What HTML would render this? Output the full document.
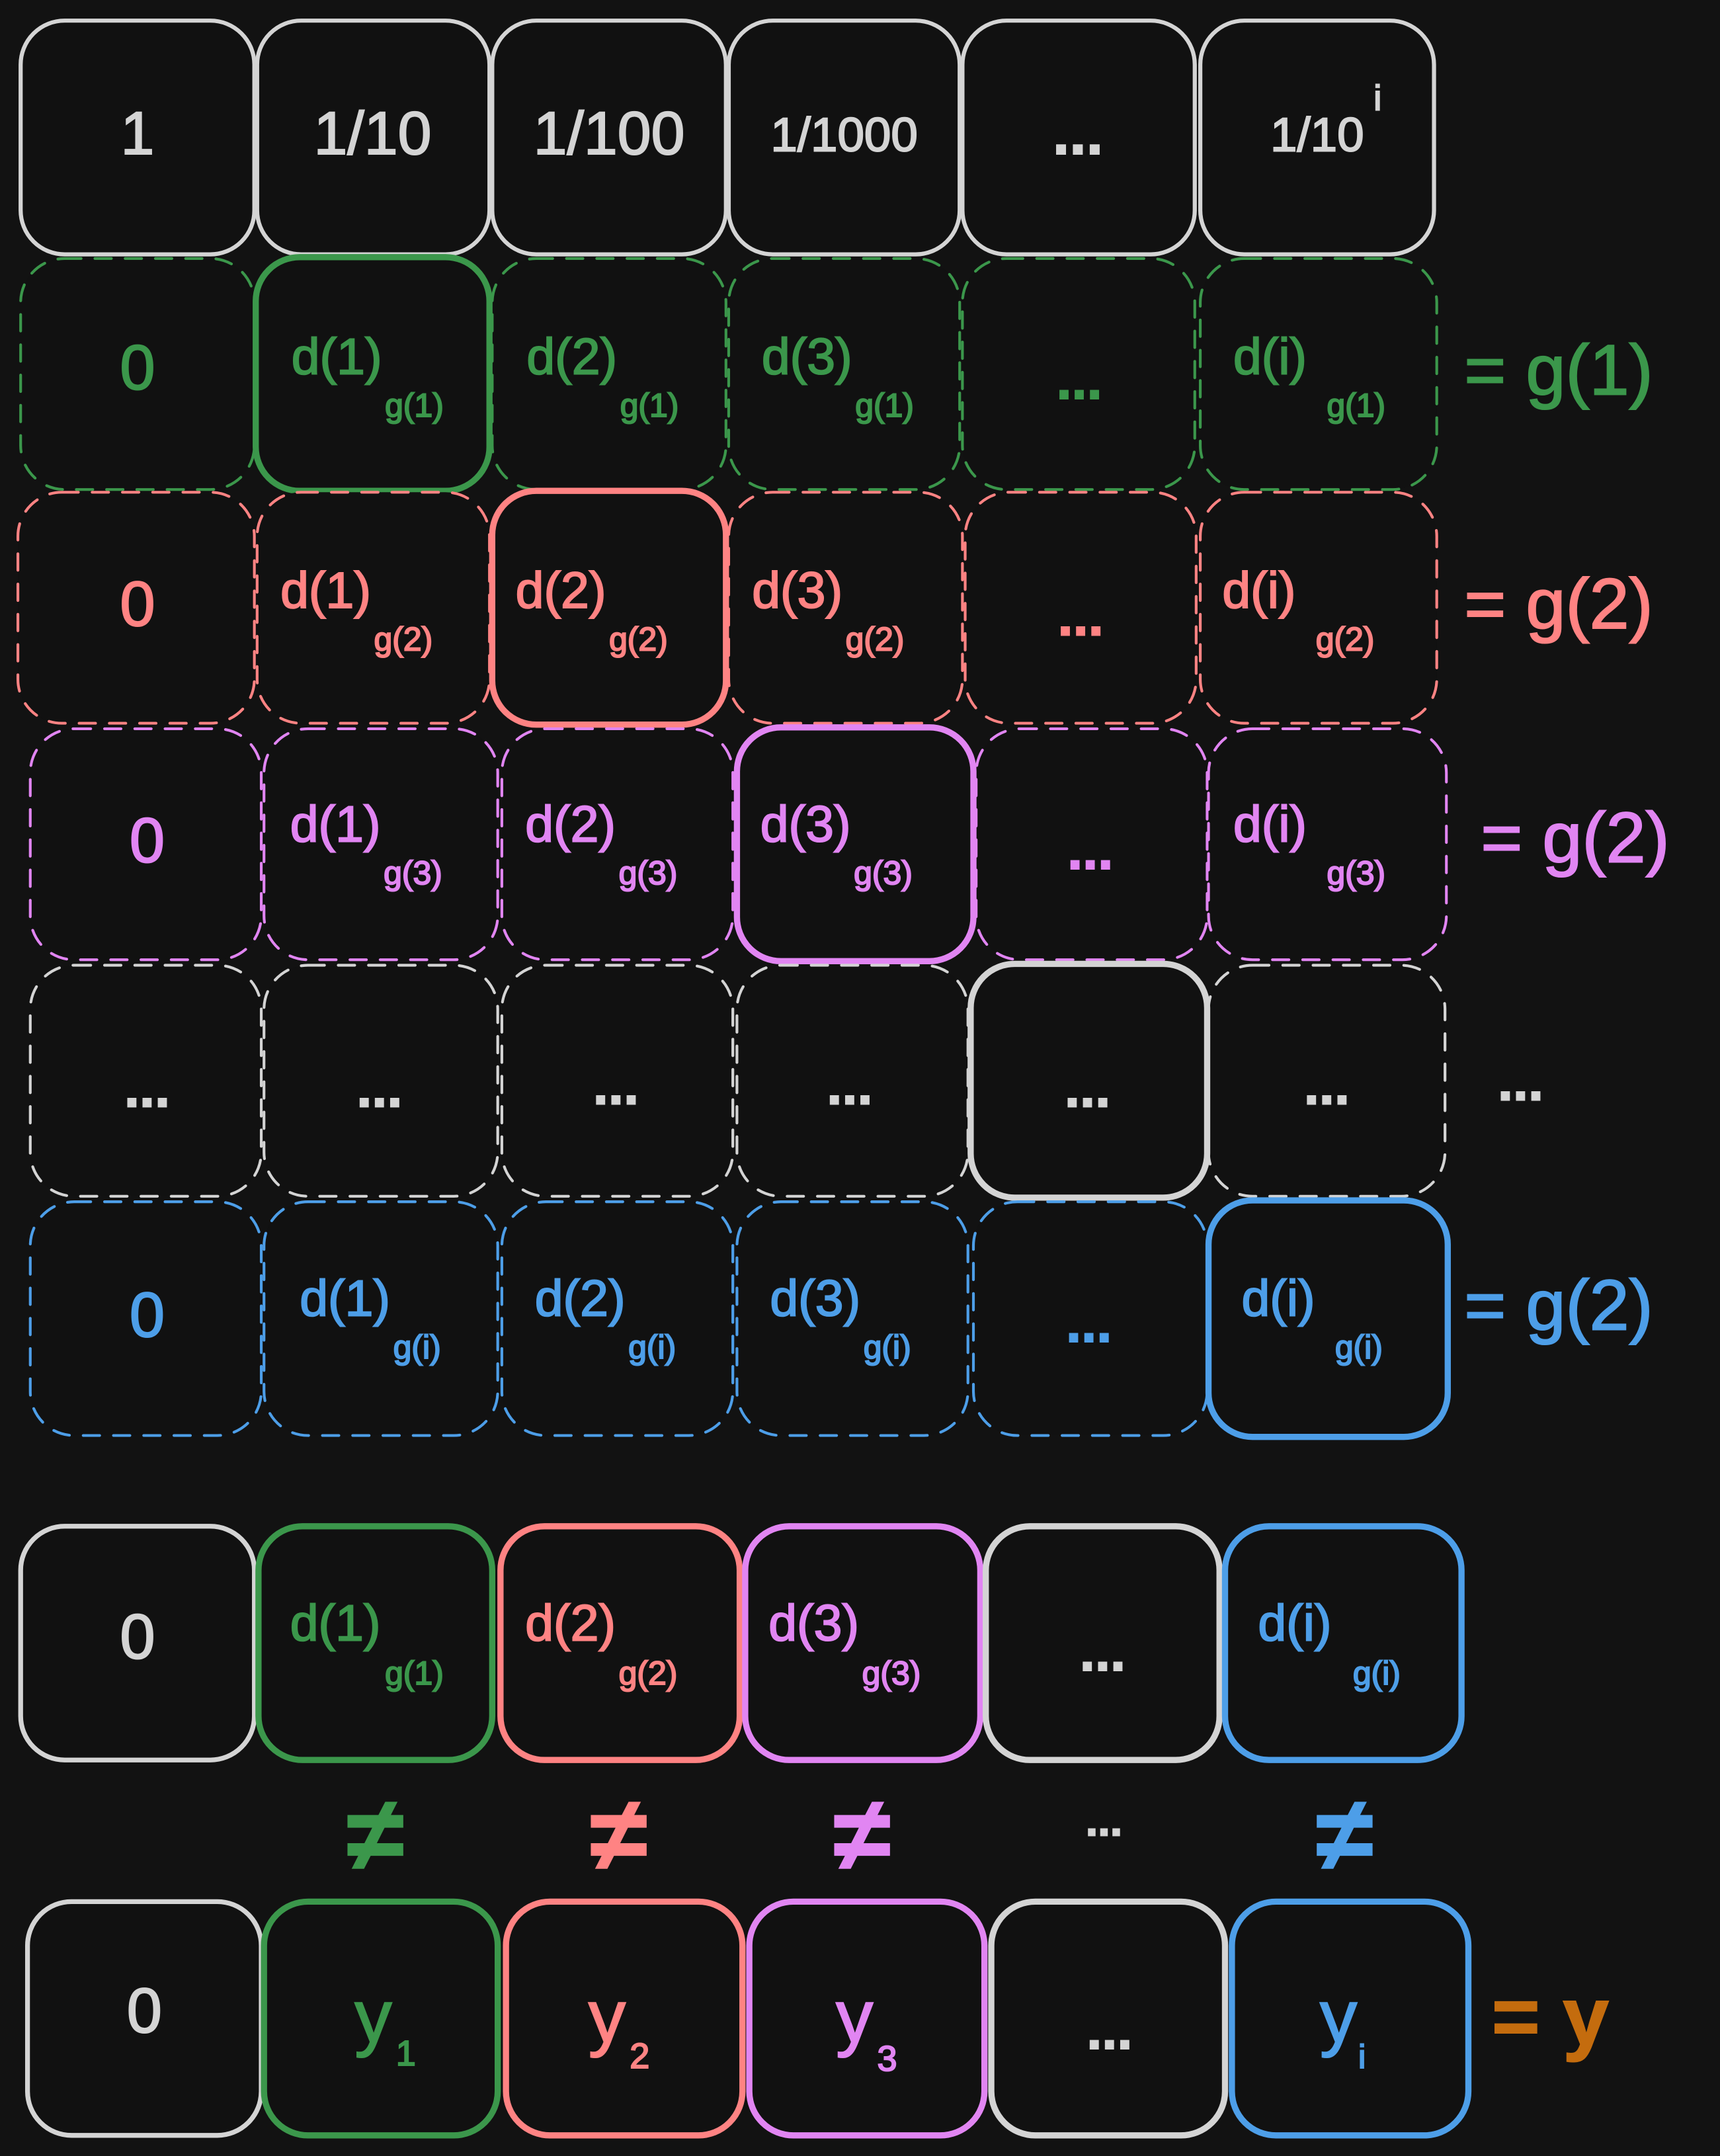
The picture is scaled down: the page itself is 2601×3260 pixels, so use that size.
<!DOCTYPE html>
<html><head><meta charset="utf-8"><style>
html,body{margin:0;padding:0;background:#121212;}
svg{display:block}
text{font-family:"Liberation Sans",sans-serif;stroke-width:1;}
.dots{font-weight:bold;}
</style></head><body>
<svg width="2601" height="3260" viewBox="0 0 1251 1568" xmlns="http://www.w3.org/2000/svg">
<rect width="1251" height="1568" fill="#121212"/>
<g fill="#111" stroke-linecap="round">
<!-- row0 -->
<g stroke="#d4d4d4" stroke-width="3">
<rect x="15" y="15" width="170" height="170" rx="32"/>
<rect x="187" y="15" width="169" height="170" rx="32"/>
<rect x="358" y="15" width="170" height="170" rx="32"/>
<rect x="530" y="15" width="168" height="170" rx="32"/>
<rect x="700" y="15" width="169" height="170" rx="32"/>
<rect x="873" y="15" width="170" height="170" rx="32"/>
</g>
<g fill="#d4d4d4" stroke="#d4d4d4" font-size="44" text-anchor="middle">
<text x="100" y="112">1</text><text x="271" y="112">1/10</text><text x="443" y="112">1/100</text>
<text x="614" y="110" font-size="35">1/1000</text><text x="784" y="112" class="dots">...</text>
<text x="958" y="110" font-size="35">1/10</text><text x="1002" y="80" font-size="26">i</text>
</g>
<!-- row1 green -->
<g stroke="#3b974b" stroke-width="2" stroke-dasharray="12 10">
<rect x="15" y="188" width="170" height="168" rx="32"/>
<rect x="358" y="188" width="170" height="168" rx="32"/>
<rect x="530" y="188" width="168" height="168" rx="32"/>
<rect x="700" y="188" width="169" height="168" rx="32"/>
<rect x="873" y="188" width="172" height="168" rx="32"/>
</g>
<rect x="186" y="187" width="170" height="170" rx="32" stroke="#3b974b" stroke-width="4.5"/>
<g fill="#3b974b" stroke="#3b974b">
<text x="100" y="283" font-size="46" text-anchor="middle">0</text>
<text x="212" y="272" font-size="37">d(1)</text><text x="280" y="303" font-size="24">g(1)</text>
<text x="383" y="272" font-size="37">d(2)</text><text x="451" y="303" font-size="24">g(1)</text>
<text x="554" y="272" font-size="37">d(3)</text><text x="622" y="303" font-size="24">g(1)</text>
<text x="785" y="290" font-size="40" text-anchor="middle" class="dots">...</text>
<text x="897" y="272" font-size="37">d(i)</text><text x="965" y="303" font-size="24">g(1)</text>
<text x="1065" y="287" font-size="52">= g(1)</text>
</g>
<!-- row2 red -->
<g stroke="#ff8383" stroke-width="2" stroke-dasharray="12 10">
<rect x="13" y="358" width="172" height="168" rx="32"/>
<rect x="187" y="358" width="169" height="168" rx="32"/>
<rect x="530" y="358" width="170" height="168" rx="32"/>
<rect x="702" y="358" width="168" height="168" rx="32"/>
<rect x="873" y="358" width="172" height="168" rx="32"/>
</g>
<rect x="358" y="357" width="170" height="170" rx="32" stroke="#ff8383" stroke-width="4.5"/>
<g fill="#ff8383" stroke="#ff8383">
<text x="100" y="455" font-size="46" text-anchor="middle">0</text>
<text x="204" y="442" font-size="37">d(1)</text><text x="272" y="473" font-size="24">g(2)</text>
<text x="375" y="442" font-size="37">d(2)</text><text x="443" y="473" font-size="24">g(2)</text>
<text x="547" y="442" font-size="37">d(3)</text><text x="615" y="473" font-size="24">g(2)</text>
<text x="786" y="462" font-size="40" text-anchor="middle" class="dots">...</text>
<text x="889" y="442" font-size="37">d(i)</text><text x="957" y="473" font-size="24">g(2)</text>
<text x="1065" y="457" font-size="52">= g(2)</text>
</g>
<!-- row3 purple -->
<g stroke="#e185f2" stroke-width="2" stroke-dasharray="12 10">
<rect x="22" y="530" width="168" height="168" rx="32"/>
<rect x="192" y="530" width="170" height="168" rx="32"/>
<rect x="365" y="530" width="168" height="168" rx="32"/>
<rect x="710" y="530" width="168" height="168" rx="32"/>
<rect x="879" y="530" width="173" height="168" rx="32"/>
</g>
<rect x="536" y="529" width="172" height="170" rx="32" stroke="#e185f2" stroke-width="4.5"/>
<g fill="#e185f2" stroke="#e185f2">
<text x="107" y="627" font-size="46" text-anchor="middle">0</text>
<text x="211" y="612" font-size="37">d(1)</text><text x="279" y="643" font-size="24">g(3)</text>
<text x="382" y="612" font-size="37">d(2)</text><text x="450" y="643" font-size="24">g(3)</text>
<text x="553" y="612" font-size="37">d(3)</text><text x="621" y="643" font-size="24">g(3)</text>
<text x="793" y="632" font-size="40" text-anchor="middle" class="dots">...</text>
<text x="897" y="612" font-size="37">d(i)</text><text x="965" y="643" font-size="24">g(3)</text>
<text x="1077" y="627" font-size="52">= g(2)</text>
</g>
<!-- row4 white -->
<g stroke="#d4d4d4" stroke-width="2" stroke-dasharray="12 10">
<rect x="22" y="702" width="168" height="168" rx="32"/>
<rect x="192" y="702" width="170" height="168" rx="32"/>
<rect x="365" y="702" width="168" height="168" rx="32"/>
<rect x="536" y="702" width="168" height="168" rx="32"/>
<rect x="879" y="702" width="172" height="168" rx="32"/>
</g>
<rect x="706" y="701" width="172" height="170" rx="32" stroke="#d4d4d4" stroke-width="4.5"/>
<g fill="#d4d4d4" stroke="#d4d4d4" font-size="40" text-anchor="middle" class="dots">
<text x="107" y="805">...</text><text x="276" y="805">...</text><text x="448" y="803">...</text>
<text x="618" y="803">...</text><text x="791" y="805">...</text><text x="965" y="803">...</text>
<text x="1106" y="800">...</text>
</g>
<!-- row5 blue -->
<g stroke="#4d9ee8" stroke-width="2" stroke-dasharray="12 10">
<rect x="22" y="874" width="168" height="170" rx="32"/>
<rect x="192" y="874" width="170" height="170" rx="32"/>
<rect x="365" y="874" width="168" height="170" rx="32"/>
<rect x="536" y="874" width="168" height="170" rx="32"/>
<rect x="708" y="874" width="170" height="170" rx="32"/>
</g>
<rect x="879" y="873" width="174" height="172" rx="32" stroke="#4d9ee8" stroke-width="4.5"/>
<g fill="#4d9ee8" stroke="#4d9ee8">
<text x="107" y="972" font-size="46" text-anchor="middle">0</text>
<text x="218" y="957" font-size="37">d(1)</text><text x="286" y="988" font-size="24">g(i)</text>
<text x="389" y="957" font-size="37">d(2)</text><text x="457" y="988" font-size="24">g(i)</text>
<text x="560" y="957" font-size="37">d(3)</text><text x="628" y="988" font-size="24">g(i)</text>
<text x="792" y="976" font-size="40" text-anchor="middle" class="dots">...</text>
<text x="903" y="957" font-size="37">d(i)</text><text x="971" y="988" font-size="24">g(i)</text>
<text x="1065" y="967" font-size="52">= g(2)</text>
</g>
<!-- bottom row A -->
<rect x="15" y="1110" width="170" height="170" rx="32" stroke="#d4d4d4" stroke-width="3.5"/>
<rect x="188" y="1110" width="170" height="170" rx="32" stroke="#3b974b" stroke-width="4.5"/>
<rect x="364" y="1110" width="174" height="170" rx="32" stroke="#ff8383" stroke-width="4.5"/>
<rect x="542" y="1110" width="171" height="170" rx="32" stroke="#e185f2" stroke-width="4.5"/>
<rect x="717" y="1110" width="170" height="170" rx="32" stroke="#d4d4d4" stroke-width="4.5"/>
<rect x="891" y="1110" width="172" height="170" rx="32" stroke="#4d9ee8" stroke-width="4.5"/>
<text x="100" y="1206" font-size="46" text-anchor="middle" fill="#d4d4d4" stroke="#d4d4d4">0</text>
<text x="211" y="1193" font-size="37" fill="#3b974b" stroke="#3b974b">d(1)</text><text x="280" y="1225" font-size="24" fill="#3b974b" stroke="#3b974b">g(1)</text>
<text x="382" y="1193" font-size="37" fill="#ff8383" stroke="#ff8383">d(2)</text><text x="450" y="1225" font-size="24" fill="#ff8383" stroke="#ff8383">g(2)</text>
<text x="559" y="1193" font-size="37" fill="#e185f2" stroke="#e185f2">d(3)</text><text x="627" y="1225" font-size="24" fill="#e185f2" stroke="#e185f2">g(3)</text>
<text x="802" y="1215" font-size="40" text-anchor="middle" fill="#d4d4d4" stroke="#d4d4d4" class="dots">...</text>
<text x="915" y="1193" font-size="37" fill="#4d9ee8" stroke="#4d9ee8">d(i)</text><text x="984" y="1225" font-size="24" fill="#4d9ee8" stroke="#4d9ee8">g(i)</text>
<!-- neq -->
<g font-size="76" text-anchor="middle" font-weight="bold">
<text x="273" y="1360" fill="#3b974b" stroke="#3b974b">≠</text>
<text x="450" y="1360" fill="#ff8383" stroke="#ff8383">≠</text>
<text x="627" y="1360" fill="#e185f2" stroke="#e185f2">≠</text>
<text x="803" y="1335" font-size="32" fill="#d4d4d4" stroke="#d4d4d4">...</text>
<text x="978" y="1360" fill="#4d9ee8" stroke="#4d9ee8">≠</text>
</g>
<!-- bottom row B -->
<rect x="20" y="1383" width="170" height="170" rx="32" stroke="#d4d4d4" stroke-width="3.5"/>
<rect x="192" y="1383" width="170" height="170" rx="32" stroke="#3b974b" stroke-width="4.5"/>
<rect x="368" y="1383" width="172" height="170" rx="32" stroke="#ff8383" stroke-width="4.5"/>
<rect x="545" y="1383" width="171" height="170" rx="32" stroke="#e185f2" stroke-width="4.5"/>
<rect x="721" y="1383" width="170" height="170" rx="32" stroke="#d4d4d4" stroke-width="4.5"/>
<rect x="896" y="1383" width="172" height="170" rx="32" stroke="#4d9ee8" stroke-width="4.5"/>
<text x="105" y="1478" font-size="46" text-anchor="middle" fill="#d4d4d4" stroke="#d4d4d4">0</text>
<text x="258" y="1485" font-size="54" fill="#3b974b" stroke="#3b974b">y</text><text x="288" y="1502" font-size="26" fill="#3b974b" stroke="#3b974b">1</text>
<text x="428" y="1485" font-size="54" fill="#ff8383" stroke="#ff8383">y</text><text x="458" y="1504" font-size="26" fill="#ff8383" stroke="#ff8383">2</text>
<text x="608" y="1485" font-size="54" fill="#e185f2" stroke="#e185f2">y</text><text x="638" y="1506" font-size="26" fill="#e185f2" stroke="#e185f2">3</text>
<text x="807" y="1490" font-size="40" text-anchor="middle" fill="#d4d4d4" stroke="#d4d4d4" class="dots">...</text>
<text x="960" y="1485" font-size="54" fill="#4d9ee8" stroke="#4d9ee8">y</text><text x="988" y="1504" font-size="24" fill="#4d9ee8" stroke="#4d9ee8">i</text>
<text x="1085" y="1487" font-size="60" font-weight="bold" fill="#c46c0e" stroke="#c46c0e">= y</text>
</g>
</svg>
</body></html>
